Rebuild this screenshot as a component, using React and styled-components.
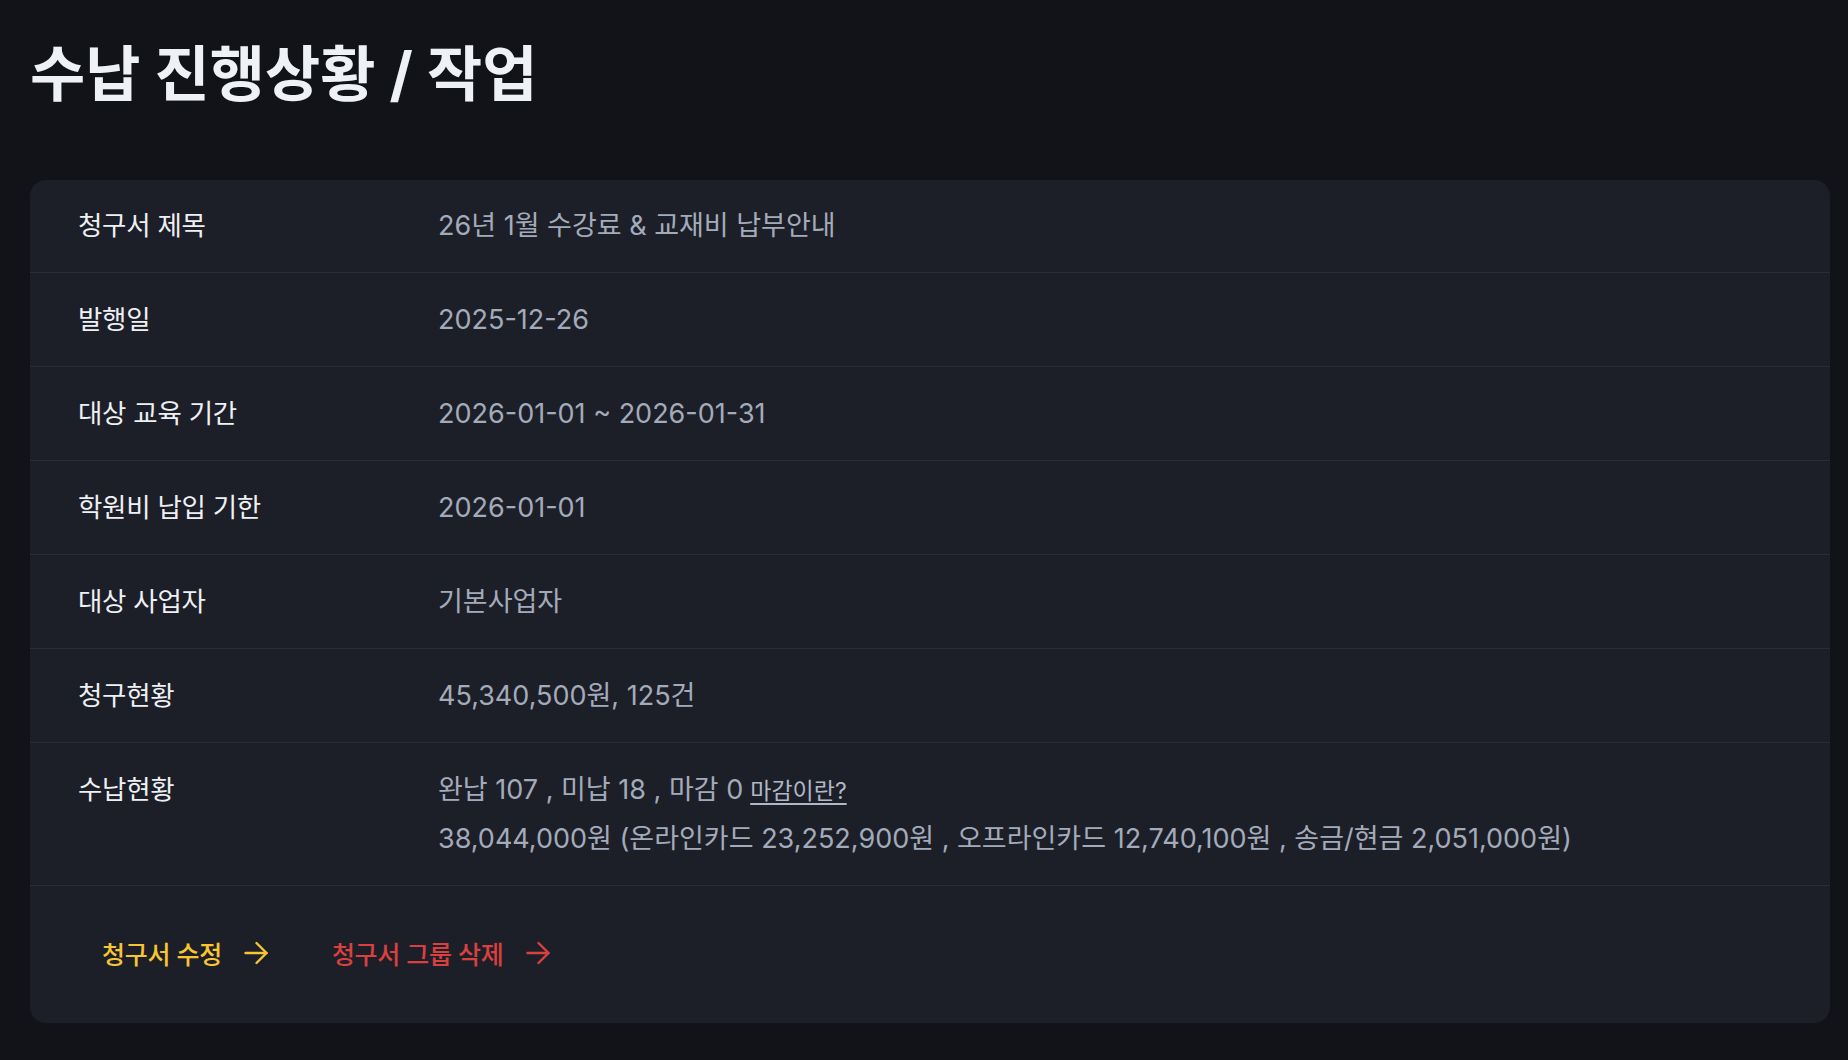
import styled, { createGlobalStyle } from "styled-components";

const GlobalStyle = createGlobalStyle`
    body {
        margin: 0;
        background-color: #121318;
        font-family: Inter, "Noto Sans CJK KR", sans-serif;
        color: #eef0f4;
    }
`;

const Page = styled.main`
    padding: 32px 18px 38px 30px;
`;

const Title = styled.h1`
    margin: 0 0 64px 0;
    font-size: 60px;
    line-height: 84px;
    font-weight: 700;
    color: #eef1f6;
`;

const Card = styled.section`
    background-color: #1d1f28;
    border-radius: 16px;
    overflow: hidden;
`;

const Row = styled.div`
    display: grid;
    grid-template-columns: 360px 1fr;
    align-items: start;
    padding: 23px 48px;
    border-bottom: 1px solid #2a2d37;
    line-height: 47px;

    &:first-child {
        padding-top: 22px;
    }
`;

const Label = styled.div`
    color: #eef0f4;
    font-size: 26.5px;
    font-weight: 400;
    letter-spacing: -0.3px;
`;

const Value = styled.div`
    color: #a3abbb;
    font-size: 27px;
    font-weight: 400;
`;

const HelpLink = styled.a`
    margin-left: 7px;
    font-size: 23px;
    color: #b0b8c7;
    text-decoration: underline;
    text-underline-offset: 4px;
    cursor: pointer;
`;

const Footer = styled.div`
    display: flex;
    gap: 16px;
    padding: 43px 48px 46px 48px;
`;

const ActionButton = styled.button`
    display: flex;
    align-items: center;
    gap: 22px;
    height: 48px;
    padding: 0 24px;
    border: none;
    border-radius: 10px;
    background: transparent;
    color: ${(p) => (p.$danger ? "#d9403e" : "#f7c531")};
    font-family: inherit;
    font-size: 25px;
    font-weight: 500;
    letter-spacing: -0.3px;
    cursor: pointer;

    &:hover {
        background-color: #262934;
    }
`;

const Arrow = () => (
    <svg width="24" height="24" viewBox="0 0 24 24" fill="none" stroke="currentColor" strokeWidth="2.4" strokeLinecap="round" strokeLinejoin="round">
        <path d="M1.5 12h21" />
        <path d="M12.5 2l10 10-10 10" />
    </svg>
);

const rows = [
    { label: "청구서 제목", value: "26년 1월 수강료 & 교재비 납부안내" },
    { label: "발행일", value: "2025-12-26" },
    { label: "대상 교육 기간", value: "2026-01-01 ~ 2026-01-31" },
    { label: "학원비 납입 기한", value: "2026-01-01" },
    { label: "대상 사업자", value: "기본사업자" },
    { label: "청구현황", value: "45,340,500원, 125건" },
];

const App = () => {
    return (
        <>
            <GlobalStyle />
            <Page>
                <Title>수납 진행상황 / 작업</Title>
                <Card>
                    {rows.map((row) => (
                        <Row key={row.label}>
                            <Label>{row.label}</Label>
                            <Value>{row.value}</Value>
                        </Row>
                    ))}
                    <Row>
                        <Label>수납현황</Label>
                        <Value>
                            <div>
                                완납 107 , 미납 18 , 마감 0<HelpLink>마감이란?</HelpLink>
                            </div>
                            <div>
                                38,044,000원 (온라인카드 23,252,900원 , 오프라인카드 12,740,100원 , 송금/현금 2,051,000원)
                            </div>
                        </Value>
                    </Row>
                    <Footer>
                        <ActionButton>
                            청구서 수정
                            <Arrow />
                        </ActionButton>
                        <ActionButton $danger>
                            청구서 그룹 삭제
                            <Arrow />
                        </ActionButton>
                    </Footer>
                </Card>
            </Page>
        </>
    );
};

export default App;
